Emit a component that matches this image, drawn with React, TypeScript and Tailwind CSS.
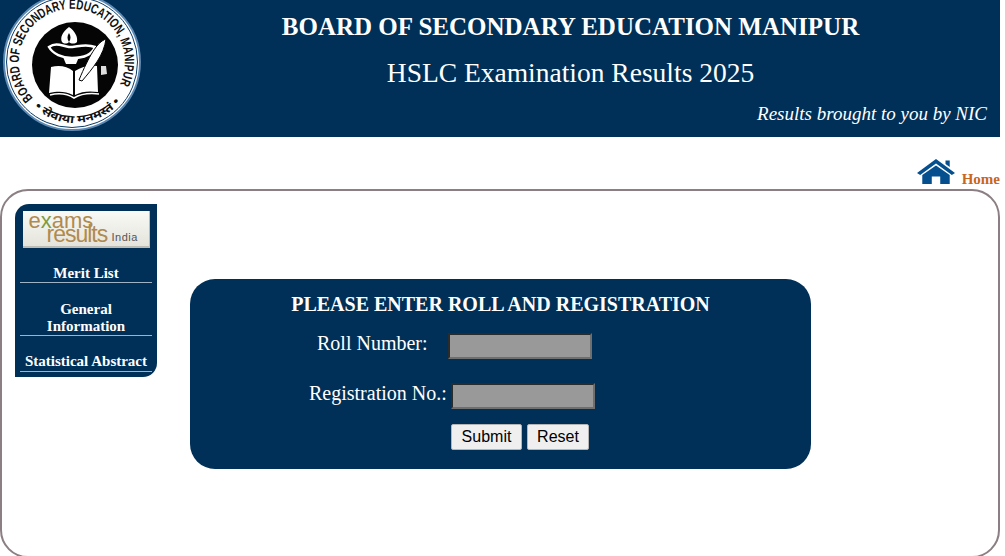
const serif = "font-['Liberation_Serif','Times_New_Roman',serif]";

function BoardLogo() {
  return (
    <svg width="141" height="134" viewBox="0 0 141 134" className="shrink-0">
      <defs>
        <path id="topArc" d="M 33 98 A 53 53 0 1 1 119 86" />
        <path id="bottomArc" d="M 30 103 A 60 60 0 0 0 122 100" />
      </defs>
      <circle cx="72" cy="62" r="68" fill="#fff" stroke="#5d8ab5" strokeWidth="2" />
      <circle cx="72" cy="62" r="65.500" fill="none" stroke="#0b3c68" strokeWidth="1" />
      <circle cx="75" cy="65" r="43" fill="#050505" />
      <text fontFamily="Liberation Sans, sans-serif" fontSize="13.500" fontWeight="700" fill="#111">
        <textPath href="#topArc" textLength="229" lengthAdjust="spacingAndGlyphs">
          BOARD OF SECONDARY EDUCATION, MANIPUR
        </textPath>
      </text>
      <text fontFamily="Noto Sans, Liberation Sans, sans-serif" fontSize="11" fontWeight="700" fill="#111">
        <textPath href="#bottomArc" startOffset="6" textLength="96" lengthAdjust="spacingAndGlyphs">
          • सेवाया मनमस्तं •
        </textPath>
      </text>
      {/* lamp */}
      <path d="M69 27 C62 32 60 38 62 42 C64 44 67 44 69 42 C71 44 75 44 77 42 C78 37 75 31 69 27Z" fill="#fff" />
      <path d="M69 33 C67 36 67 39 69 42 C71 39 71 36 69 33Z" fill="#050505" />
      <path
        d="M49 47 C56 42 62 46 69 47 C77 47 86 43 95 47 C92 55 82 58 72 58 C62 58 53 54 49 47Z"
        fill="#050505"
        stroke="#fff"
        strokeWidth="2.500"
      />
      <path d="M63 57 H79 L76 64 H66Z" fill="#fff" />
      {/* book */}
      <path d="M51 67 C59 65 67 66 73 71 L73 95 C65 91 58 91 49 93Z" fill="#fff" />
      <path d="M75 71 C82 66 90 65 97 66 L98 92 C90 91 82 91 75 95Z" fill="#fff" />
      <path d="M50 95 C58 93 66 93 74 98 C82 93 90 93 99 94" fill="none" stroke="#fff" strokeWidth="1.500" />
      {/* quill */}
      <path d="M106 39 C97 42 89 56 79 80 L82 81 C93 68 104 55 106 39Z" fill="#fff" stroke="#050505" strokeWidth="1" />
      <path d="M101 66 L106 66 L107 74 L101 75Z" fill="#ddd" />
    </svg>
  );
}

function ExamsBadge() {
  return (
    <div className="relative h-[37px] w-[127px] overflow-hidden border-b-2 border-r border-[#bdbdb5] bg-gradient-to-b from-[#fafaf6] to-[#e4e4dc] font-['Liberation_Sans',sans-serif]">
      <span className="absolute left-[6px] top-[-2px] text-[22px] leading-[24px] text-[#b08a4e]">
        e<span className="text-[#7d9a45]">x</span>ams
      </span>
      <span className="absolute left-[24px] top-[11px] text-[23px] leading-[24px] tracking-[-1px] text-[#b08a4e]">
        results
      </span>
      <span className="absolute left-[89px] top-[19px] text-[11px] leading-[14px] tracking-[0.5px] text-[#555]">
        India
      </span>
    </div>
  );
}

function SideLink({ children, className }: { children: React.ReactNode; className: string }) {
  return (
    <a className={`block w-[132px] border-b border-[#9fb3c4] text-center text-[15px] font-bold leading-[17px] text-white ${className}`}>
      {children}
    </a>
  );
}

export default function App() {
  return (
    <div className={`h-[556px] w-[1000px] overflow-hidden bg-white ${serif}`}>
      <header className="flex h-[137px] bg-[#003057]">
        <BoardLogo />
        <div className="flex flex-1 flex-col">
          <h1 className="mt-[12px] text-center text-[25px] font-bold leading-[30px] text-white">
            BOARD OF SECONDARY EDUCATION MANIPUR
          </h1>
          <h2 className="mt-[14px] text-center text-[27.500px] leading-[34px] text-white">
            HSLC Examination Results 2025
          </h2>
          <p className="mr-[13px] mt-[12px] text-right text-[19px] italic leading-[24px] text-white">
            Results brought to you by NIC
          </p>
        </div>
      </header>

      <div className="flex h-[53px] items-end justify-end pb-[1px]">
        <svg width="38" height="25" viewBox="1 1 36 25" preserveAspectRatio="none" className="mb-[5px]">
          <path d="M19 1 L37 15 L34 17 L19 5.500 L4 17 L1 15 Z M28 2.500 H32 V9 L28 6 Z" fill="#064f8f" />
          <path d="M6 17 L19 7.500 L32 17 V26 H23 V18.500 H15 V26 H6 Z" fill="#064f8f" />
        </svg>
        <a className="mb-[2px] ml-[7px] text-[15px] font-bold leading-[16px] text-[#c9661f]">Home</a>
      </div>

      <main className="-mt-[1px] flex h-[369px] gap-[33px] rounded-[28px] border-2 border-[#8b7f84] pl-[13px] pt-[13px]">
        <nav className="flex h-[173px] w-[142px] shrink-0 flex-col items-center rounded-br-[14px] rounded-tl-[14px] bg-[#003057] pt-[7px]">
          <ExamsBadge />
          <SideLink className="mt-[17px]">Merit List</SideLink>
          <SideLink className="mt-[18px]">
            General
            <br />
            Information
          </SideLink>
          <SideLink className="mt-[17px] pb-[1px]">Statistical Abstract</SideLink>
        </nav>

        <form className="mt-[75px] h-[190px] w-[621px] rounded-[25px] bg-[#003057] text-white">
          <h3 className="mt-[13px] text-center text-[20px] font-bold leading-[24px]">
            PLEASE ENTER ROLL AND REGISTRATION
          </h3>
          <div className="mt-[17px] flex items-start pl-[127px]">
            <label className="-mt-[1px] w-[131px] text-[20px] leading-[22px]">Roll Number:</label>
            <input className="h-[26px] w-[144px] border-2 border-b-[#6f6f6f] border-l-[#2b2b2b] border-r-[#6f6f6f] border-t-[#2b2b2b] bg-[#999999]" />
          </div>
          <div className="mt-[24px] flex items-start pl-[119px]">
            <label className="-mt-[1px] w-[142px] text-[20px] leading-[22px]">Registration No.:</label>
            <input className="h-[26px] w-[144px] border-2 border-b-[#6f6f6f] border-l-[#2b2b2b] border-r-[#6f6f6f] border-t-[#2b2b2b] bg-[#999999]" />
          </div>
          <div className="mt-[15px] flex gap-[5px] pl-[261px] font-['Liberation_Sans',sans-serif] text-[16px] text-black">
            <button type="button" className="h-[26px] w-[71px] rounded-[2px] border border-[#b5b5b5] bg-[#efefef]">
              Submit
            </button>
            <button type="button" className="h-[26px] w-[62px] rounded-[2px] border border-[#b5b5b5] bg-[#efefef]">
              Reset
            </button>
          </div>
        </form>
      </main>
    </div>
  );
}
